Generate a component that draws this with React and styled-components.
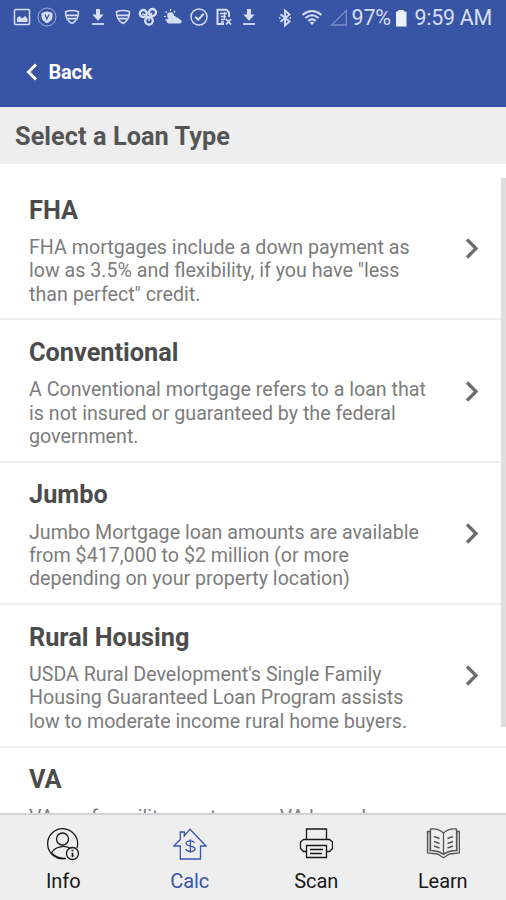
import styled, { createGlobalStyle } from 'styled-components';


let GlobalStyle = createGlobalStyle`
    *{
        box-sizing: border-box;
    }
    body{
        margin: 0;
        font-family: Roboto, "Liberation Sans", sans-serif;
    }
    p, h1, h2{
        margin: 0;
    }
`

let loans = [
    {
        title: 'FHA',
        lines: ['FHA mortgages include a down payment as', 'low as 3.5% and flexibility, if you have "less', 'than perfect" credit.']
    },
    {
        title: 'Conventional',
        lines: ['A Conventional mortgage refers to a loan that', 'is not insured or guaranteed by the federal', 'government.']
    },
    {
        title: 'Jumbo',
        lines: ['Jumbo Mortgage loan amounts are available', 'from $417,000 to $2 million (or more', 'depending on your property location)']
    },
    {
        title: 'Rural Housing',
        lines: ["USDA Rural Development's Single Family", 'Housing Guaranteed Loan Program assists', 'low to moderate income rural home buyers.']
    },
    {
        title: 'VA',
        height: '189px',
        lines: ['VA are for military veterans.  VA loans have']
    },
]


let PictureIcon = () => (
    <StatusSvg viewBox='0 0 20 20'>
        <rect x='2.5' y='2.5' width='15' height='15' rx='1' />
        <path className='fill' d='M5 15v-4l2.5-2 2.5 2.5 3-2.5 2.5 2.5V15z' />
    </StatusSvg>
)

let ShieldCircleIcon = () => (
    <StatusSvg viewBox='0 0 20 20'>
        <circle cx='10' cy='10' r='9' strokeWidth='.9' opacity='.7' />
        <path className='fill' d='M10 4.2 15.5 6v3.5c0 3-2.5 5.5-5.500 6.800-3-1.300-5.500-3.800-5.500-6.800V6z' />
        <path d='M8 7.500l2 4.500 2-4.500' stroke='#3a56a6' strokeWidth='1.300' />
    </StatusSvg>
)

let FilterShieldIcon = () => (
    <StatusSvg viewBox='0 0 20 20'>
        <path d='M3.500 4.800Q10 2 16.500 4.800C16.500 10.500 14 14.500 10 16.500 6 14.500 3.500 10.500 3.500 4.800z' />
        <path d='M4 8.300h12M6 11.700h8' strokeWidth='1.700' />
    </StatusSvg>
)

let DownloadIcon = () => (
    <StatusSvg viewBox='0 0 20 20'>
        <path className='fill' d='M8 2h4V7.500h3.700L10 13.800 4.300 7.500H8z' />
        <path d='M4 17h12' strokeWidth='1.800' />
    </StatusSvg>
)

let CirclesIcon = () => (
    <StatusSvg viewBox='0 0 20 20'>
        <g strokeWidth='2.300'>
            <circle cx='5.300' cy='6.500' r='3.500' />
            <circle cx='14.500' cy='5.500' r='3.500' />
            <circle cx='11' cy='13.800' r='3.800' />
            <path d='M4 7l4 1 3-3M14 6l-3 4v4' strokeWidth='1.500' />
        </g>
    </StatusSvg>
)

let WeatherIcon = () => (
    <StatusSvg viewBox='0 0 20 20'>
        <circle className='fill' cx='7.500' cy='8.500' r='3.300' />
        <path d='M7.500 2v2M2.500 4.500l1.500 1.300M1 9.500h2M12.200 4l-1.400 1.300M2.500 13.500l1.300-1' strokeWidth='1.200' />
        <path className='fill' d='M5.500 16.500a2.700 2.700 0 0 1 .4-5.300 4.300 4.300 0 0 1 7.700-.7c1.500-.2 2.300.8 2.500 1.800 3.400.2 3.400 4.200.4 4.200z' />
    </StatusSvg>
)

let CheckCircleIcon = () => (
    <StatusSvg viewBox='0 0 20 20'>
        <circle cx='10' cy='10' r='8' />
        <path d='M6.200 9.800l3 3 5.500-6' strokeWidth='2' />
    </StatusSvg>
)

let FileCrossIcon = () => (
    <StatusSvg viewBox='0 0 20 20'>
        <path d='M10 17H3.500V2.700h9L15 5.500V10' strokeWidth='2' />
        <path d='M6 6.500h7M7 9.500h5M7 12.500h3M7 15h3M10.500 5v8' />
        <path d='M12 12l5 5.500M17 12l-5 5.500' strokeWidth='1.800' />
    </StatusSvg>
)

let BluetoothIcon = () => (
    <StatusSvg viewBox='0 0 20 20'>
        <path d='M5.500 6.300l9 7.200-4.500 4V2.500l4.500 4-9 7.200' strokeWidth='1.900' />
        <path d='M4 10h1.500M14.500 10h1.500' />
    </StatusSvg>
)

let WifiIcon = () => (
    <StatusSvg viewBox='0 0 20 20'>
        <path d='M.5 7Q10-1 19.500 7M3.500 10Q10 4.500 16.500 10M6.300 13Q10 9.700 13.700 13' strokeWidth='2' />
        <path className='fill' d='M7.700 14.500Q10 12.800 12.300 14.500L10 17z' />
    </StatusSvg>
)

let SignalIcon = () => (
    <StatusSvg viewBox='0 0 20 20' opacity='.42'>
        <path d='M2.500 17H17.300V2.500z' strokeWidth='1.300' />
    </StatusSvg>
)

let InfoIcon = () => (
    <TabSvg viewBox='0 0 34 34'>
        <path d='M20 31.300A15 15 0 1 1 31 21' />
        <circle cx='16.500' cy='12' r='6' />
        <path d='M5.500 26C9 19 19 18 24 21.300M6 26.500q5 5 13 5' />
        <circle cx='26.500' cy='26.500' r='6' />
        <path d='M26.500 25.800V30M26.500 22.700v1.500' strokeWidth='1.800' />
    </TabSvg>
)

let CalcIcon = () => (
    <TabSvg viewBox='0 0 34 34'>
        <path d='M7.300 32V19H1L7.300 12.500V5h4v4L17 2.200 33 19H27.500V32z' />
        <path d='M21.500 15.700c-.7-1.300-2.500-1.900-4.300-1.900-2.300 0-4.200.9-4.200 2.500 0 3.700 9 1.800 9 5.400 0 1.800-2 2.700-4.500 2.700-2.300 0-4.100-.9-4.800-2.500M17.400 12.300v13.600' />
    </TabSvg>
)

let ScanIcon = () => (
    <TabSvg viewBox='0 0 34 34'>
        <path d='M7.500 12.500V2h20v10.500M7.500 24.500H4.500L1.500 21.500V15l3-2.500h26l3 2.500v6.500l-3 3h-3' />
        <path d='M7.500 18.500h20V30.500h-20zM11 22.500h13M11 26.500h12' />
    </TabSvg>
)

let LearnIcon = () => (
    <TabSvg viewBox='0 0 34 34'>
        <g stroke='#555'>
            <path d='M17.500 6C14 2.500 9 1.700 4.500 2v21.500c5 0 9 .8 13 4 4-3.200 8-4 13-4V2C26 1.700 21 2.500 17.500 6zV27M4.500 4.500h-3v21.500l10 1 6 3.800 6-3.800 10-1V4.500h-3' />
            <path d='M8 9.500l5.500 2M8 14.500l5.500 2M8 19l5.500 2M27 9.500l-5.500 2M27 14.500l-5.500 2M27 19l-5.500 2' strokeWidth='1.500' />
            <path d='M3.300 5v19.500M31.700 5v19.500' opacity='.5' />
        </g>
    </TabSvg>
)

let notifications = [PictureIcon, ShieldCircleIcon, FilterShieldIcon, DownloadIcon, FilterShieldIcon,
    CirclesIcon, WeatherIcon, CheckCircleIcon, FileCrossIcon, DownloadIcon]

let tabs = [
    { name: 'Info', Icon: InfoIcon },
    { name: 'Calc', Icon: CalcIcon, active: true },
    { name: 'Scan', Icon: ScanIcon },
    { name: 'Learn', Icon: LearnIcon },
]


let App = () => {
    return (
        <Screen>
            <GlobalStyle />
            <Header>
                <StatusBar>
                    <Notifications>
                        {notifications.map((Icon, i) => <IconCell key={i}><Icon /></IconCell>)}
                    </Notifications>
                    <System>
                        <IconCell $width='27px'><BluetoothIcon /></IconCell>
                        <IconCell $width='27px'><WifiIcon /></IconCell>
                        <IconCell $width='26px'><SignalIcon /></IconCell>
                        <StatusText $width='44px' $spacing='-0.2px'>97%</StatusText>
                        <Battery />
                        <StatusText $spacing='-0.3px'>9:59 AM</StatusText>
                    </System>
                </StatusBar>
                <BackButton>
                    <svg width='12' height='18' viewBox='0 0 12 18' fill='none' stroke='#fff' strokeWidth='3'>
                        <path d='M10 1.500L2.500 9l7.500 7.500' />
                    </svg>
                    Back
                </BackButton>
            </Header>
            <PageTitle>Select a Loan Type</PageTitle>
            <LoanList>
                {loans.map(loan => (
                    <LoanRow key={loan.title} $height={loan.height}>
                        <LoanText>
                            <LoanName>{loan.title}</LoanName>
                            {loan.lines.map(line => <LoanLine key={line}>{line}</LoanLine>)}
                        </LoanText>
                        <svg width='14' height='22' viewBox='0 0 14 22' fill='none' stroke='#6c6c6c' strokeWidth='3.300'>
                            <path d='M2 2.500l9 9-9 9' />
                        </svg>
                    </LoanRow>
                ))}
                <ScrollThumb />
            </LoanList>
            <TabBar>
                {tabs.map(({ name, Icon, active }) => (
                    <Tab key={name} $active={active}>
                        <Icon />
                        {name}
                    </Tab>
                ))}
            </TabBar>
        </Screen>
    )
}


let Screen = styled.div`
    width: 506px;
    height: 900px;
    display: flex;
    flex-direction: column;
    overflow: hidden;
    background: #fff;
`
let Header = styled.header`
    height: 107px;
    flex-shrink: 0;
    background: #3855a5;
`
let StatusBar = styled.div`
    height: 36px;
    display: flex;
    padding-left: 9px;
    color: #d5def6;
`
let Notifications = styled.div`
    display: flex;
    width: 262.500px;
`
let System = styled.div`
    display: flex;
    align-items: center;
`
let IconCell = styled.span`
    width: ${({ $width }) => $width || '25.3px'};
    flex-shrink: 0;
    height: 34px;
    display: flex;
    align-items: center;
    justify-content: center;
`
let StatusSvg = styled.svg`
    width: 20px;
    height: 20px;
    fill: none;
    stroke: currentColor;
    stroke-width: 1.5;
    .fill{
        fill: currentColor;
        stroke: none;
    }
`
let StatusText = styled.span`
    width: ${({ $width }) => $width || 'auto'};
    font-size: 21.5px;
    line-height: 36px;
    letter-spacing: ${({ $spacing }) => $spacing};
    white-space: nowrap;
`
let Battery = styled.span`
    width: 11px;
    height: 17px;
    margin-right: 8px;
    background: #edf1fc;
    clip-path: polygon(0 12%, 25% 12%, 25% 0, 75% 0, 75% 12%, 100% 12%, 100% 100%, 0 100%);
`
let BackButton = styled.button`
    height: 71px;
    display: flex;
    align-items: center;
    gap: 11px;
    padding: 0 0 0 25.5px;
    border: none;
    background: none;
    color: #fff;
    font-family: inherit;
    font-size: 20px;
    font-weight: bold;
    letter-spacing: -0.2px;
`
let PageTitle = styled.h1`
    height: 57px;
    flex-shrink: 0;
    padding-left: 15px;
    background: #eee;
    color: #555;
    font-size: 25.3px;
    font-weight: bold;
    line-height: 59px;
    letter-spacing: 0.05px;
`
let LoanList = styled.main`
    flex: 1;
    min-height: 0;
    position: relative;
    overflow: hidden;
    padding-top: 14px;
`
let LoanRow = styled.section`
    height: ${({ $height }) => $height || '142.4px'};
    display: flex;
    align-items: center;
    justify-content: space-between;
    padding: 0 27px 0 29px;
    border-bottom: 2px solid #eee;
`
let LoanText = styled.div`
    height: 100%;
    padding-top: 16.5px;
`
let LoanName = styled.h2`
    color: #4c4c4c;
    font-size: 25.3px;
    font-weight: bold;
    line-height: 32px;
    margin-bottom: 9.5px;
`
let LoanLine = styled.p`
    color: #7c7c7c;
    font-size: 19.65px;
    line-height: 23.3px;
    white-space: pre;
`
let ScrollThumb = styled.div`
    position: absolute;
    top: 14px;
    right: 0;
    width: 5px;
    height: 549px;
    background: #dedede;
`
let TabBar = styled.nav`
    height: 87px;
    flex-shrink: 0;
    display: grid;
    grid-template-columns: repeat(4, 1fr);
    border-top: 2px solid #d3d3d3;
    background: #eee;
`
let Tab = styled.a`
    display: flex;
    flex-direction: column;
    align-items: center;
    padding-top: 12px;
    color: ${({ $active }) => $active ? '#3855b0' : '#181818'};
    font-size: 20px;
    line-height: 24px;
    letter-spacing: -0.1px;
`
let TabSvg = styled.svg`
    width: 34px;
    height: 34px;
    margin-bottom: 8px;
    fill: none;
    stroke: currentColor;
    stroke-width: 1.3;
`


export default App;
